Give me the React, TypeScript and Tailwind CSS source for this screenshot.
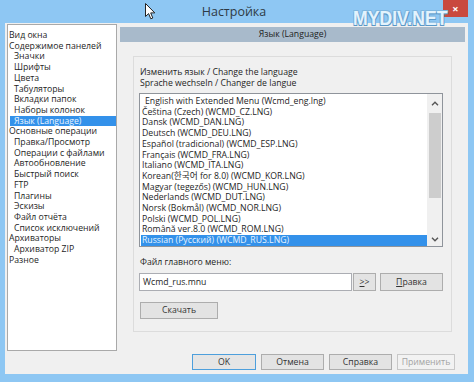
import React from 'react';

type TreeItem = { label: string; child?: boolean; selected?: boolean };

const treeItems: TreeItem[] = [
  { label: 'Вид окна' },
  { label: 'Содержимое панелей' },
  { label: 'Значки', child: true },
  { label: 'Шрифты', child: true },
  { label: 'Цвета', child: true },
  { label: 'Табуляторы', child: true },
  { label: 'Вкладки папок', child: true },
  { label: 'Наборы колонок', child: true },
  { label: 'Язык (Language)', child: true, selected: true },
  { label: 'Основные операции' },
  { label: 'Правка/Просмотр', child: true },
  { label: 'Операции с файлами', child: true },
  { label: 'Автообновление', child: true },
  { label: 'Быстрый поиск', child: true },
  { label: 'FTP', child: true },
  { label: 'Плагины', child: true },
  { label: 'Эскизы', child: true },
  { label: 'Файл отчёта', child: true },
  { label: 'Список исключений', child: true },
  { label: 'Архиваторы' },
  { label: 'Архиватор ZIP', child: true },
  { label: 'Разное' },
];

const languages = [
  'English with Extended Menu (Wcmd_eng.lng)',
  'Čeština (Czech) (WCMD_CZ.LNG)',
  'Dansk (WCMD_DAN.LNG)',
  'Deutsch (WCMD_DEU.LNG)',
  'Español (tradicional) (WCMD_ESP.LNG)',
  'Français (WCMD_FRA.LNG)',
  'Italiano (WCMD_ITA.LNG)',
  'Korean(한국어 for 8.0) (WCMD_KOR.LNG)',
  'Magyar (tegezős) (WCMD_HUN.LNG)',
  'Nederlands (WCMD_DUT.LNG)',
  'Norsk (Bokmål) (WCMD_NOR.LNG)',
  'Polski (WCMD_POL.LNG)',
  'Română ver.8.0 (WCMD_ROM.LNG)',
  'Russian (Русский) (WCMD_RUS.LNG)',
];

const font = "font-['Open_Sans','Noto_Sans_CJK_KR',sans-serif]";

function Chevron({ up }: { up?: boolean }) {
  return (
    <svg width="8" height="5" viewBox="0 0 8 5">
      <path
        d={up ? 'M1 4.2 L4 1.2 L7 4.2' : 'M1 0.8 L4 3.8 L7 0.8'}
        fill="none"
        stroke="#555"
        strokeWidth="1.4"
      />
    </svg>
  );
}

function Button({
  children,
  className = '',
  variant = 'normal',
}: {
  children: React.ReactNode;
  className?: string;
  variant?: 'normal' | 'default' | 'disabled';
}) {
  const look =
    variant === 'default'
      ? 'border-[#4d9fdc] bg-[#e5e5e5] text-[#333]'
      : variant === 'disabled'
        ? 'border-[#c8c8c8] bg-[#f2f2f2] text-[#a3a3a3]'
        : 'border-[#adadad] bg-[#e3e3e3] text-[#333]';
  return (
    <div
      className={`flex items-center justify-center border text-[8.7px] leading-none ${look} ${className}`}
    >
      {children}
    </div>
  );
}

export default function App() {
  return (
    <div className={`w-[474px] h-[382px] bg-[#8ec7f3] flex flex-col overflow-hidden ${font}`}>
      {/* Title bar */}
      <div className="relative h-[23px] flex shrink-0">
        <div className="flex-1" />
        <div className="pt-[4px] text-[12.5px] leading-[16px] text-[#2e3a44]">Настройка</div>
        <div className="flex-1 flex justify-end pr-[6px]">
          <div className="w-[25px] h-[17px] bg-[#c9493f] flex items-center justify-center text-white text-[11px] leading-none font-bold">
            ×
          </div>
        </div>

        {/* mouse pointer */}
        <svg className="absolute left-[145px] top-[3px]" width="11" height="17" viewBox="0 0 11 17">
          <path
            d="M0.5 0.5 L0.5 13.5 L3.6 10.6 L5.8 15.8 L7.8 15 L5.7 9.9 L9.8 9.9 Z"
            fill="#fff"
            stroke="#222"
            strokeWidth="1"
            strokeLinejoin="round"
          />
        </svg>

        {/* watermark */}
        <div className="absolute left-[353px] top-[6px] z-10 origin-left scale-x-[0.84] font-['Liberation_Sans',sans-serif] font-bold text-[21px] leading-[24px] text-[#e3f3fd] [text-shadow:1px_1px_0_#5a98c8,-1px_-1px_0_#7fb7e0,1px_-1px_0_#7fb7e0,-1px_1px_0_#5a98c8]">
          MYDIV.NET
        </div>
      </div>

      {/* Client area */}
      <div className="ml-[5px] w-[463px] h-[351px] bg-[#f0f0f0] flex items-start shrink-0">
        {/* Tree */}
        <div className="ml-[2px] mt-[1px] w-[110px] h-[327px] bg-white border border-[#a9a9a9] pt-[5px] text-[8.7px] leading-[10.7px] text-[#1e1e1e]">
          {treeItems.map((item) => (
            <div
              key={item.label}
              className={
                item.selected
                  ? 'ml-[2px] pl-[4px] bg-[#3391ea] text-[#eaf5ff] whitespace-nowrap'
                  : item.child
                    ? 'pl-[6px] whitespace-nowrap'
                    : 'pl-[1px] whitespace-nowrap'
              }
            >
              {item.label}
            </div>
          ))}
        </div>

        {/* Right side */}
        <div className="ml-[3px] w-[345px] h-full pt-[4px] pb-[4px] flex flex-col">
          <div className="h-[15px] bg-[#a8bacb] flex items-center justify-center text-[8.7px] leading-none text-[#222]">
            Язык (Language)
          </div>

          <div className="mt-[14px] mx-[13px] h-[276px] border border-[#dcdcdc] pt-[10px] pl-[5px] pr-[8px] flex flex-col text-[8.7px] text-[#1e1e1e]">
            <div className="leading-[11px] pl-[1px]">
              <div>Изменить язык / Change the language</div>
              <div>Sprache wechseln / Changer de langue</div>
            </div>

            <div className="mt-[4px] h-[154px] w-[304px] border border-[#8f949b] bg-white flex">
              <div className="flex-1 pt-[2px] pl-[1px] leading-[10.7px]">
                {languages.map((lang, idx) => (
                  <div
                    key={lang}
                    className={
                      idx === languages.length - 1
                        ? 'pl-[1px] bg-[#3391ea] text-[#e8f4ff] whitespace-nowrap'
                        : idx === 0
                          ? 'pl-[4px] whitespace-nowrap'
                          : 'pl-[1px] whitespace-nowrap'
                    }
                  >
                    {lang}
                  </div>
                ))}
              </div>
              <div className="w-[15px] bg-[#f0f0f0] flex flex-col items-center">
                <div className="h-[19px] flex items-center justify-center">
                  <Chevron up />
                </div>
                <div className="w-[12px] h-[85px] bg-[#cdcdcd]" />
                <div className="flex-1" />
                <div className="h-[14px] flex items-center justify-center">
                  <Chevron />
                </div>
              </div>
            </div>

            <div className="mt-[10px] leading-[11px] pl-[1px]">Файл главного меню:</div>

            <div className="mt-[5px] flex h-[18px]">
              <div className="w-[213px] h-full bg-white border border-[#abadb3] flex items-center pl-[3px] leading-none">
                Wcmd_rus.mnu
              </div>
              <Button className="ml-[1px] w-[23px] h-full">
                <span><u>&gt;</u>&gt;</span>
              </Button>
              <Button className="ml-[4px] w-[63px] h-full">
                <span><u>П</u>равка</span>
              </Button>
            </div>

            <Button className="mt-[11px] ml-[1px] w-[78px] h-[17px]">Скачать</Button>
          </div>

          <div className="mt-[22px] pr-[10px] flex justify-end gap-[5px]">
            <Button variant="default" className="w-[64px] h-[16px]">OK</Button>
            <Button className="w-[63px] h-[16px]">Отмена</Button>
            <Button className="w-[63px] h-[16px]">Справка</Button>
            <Button variant="disabled" className="w-[58px] h-[16px]">Применить</Button>
          </div>
        </div>
      </div>
    </div>
  );
}
